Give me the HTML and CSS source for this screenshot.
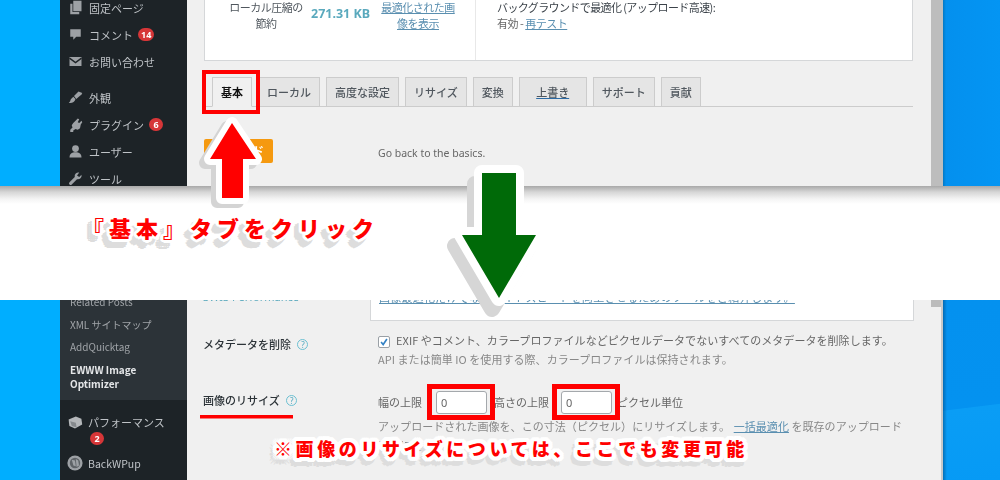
FILE: index.html
```html
<!DOCTYPE html>
<html lang="ja">
<head>
<meta charset="utf-8">
<title>EWWW Image Optimizer</title>
<link rel="stylesheet" href="styles.css">
</head>
<body>
<div class="page">

  <section class="shot shot-top">
    <div class="desk desk-left"></div>
    <nav class="side side-top">
      <a class="item"><svg class="ico" viewBox="0 0 20 20"><path d="M7 1h11v14H7z"/><path d="M3 5h3v11h9v3H3z"/></svg><span>固定ページ</span></a>
      <a class="item"><svg class="ico" viewBox="0 0 20 20"><path d="M3 3h14v10h-6l-4 4v-4H3z"/></svg><span>コメント</span><b class="badge">14</b></a>
      <a class="item"><svg class="ico" viewBox="0 0 20 20"><path d="M2 4h16v12H2z"/><path class="cut" d="M2 5.500l8 6 8-6"/></svg><span>お問い合わせ</span></a>
      <a class="item item-gap"><svg class="ico" viewBox="0 0 20 20"><path d="M8 8l6-6 5 2-1 2-7 6z"/><path d="M7 9l3 3c-1 4-5 6-9 5 2-1 2-3 3-5 1-1 2-2 3-3z"/></svg><span>外観</span></a>
      <a class="item"><svg class="ico" viewBox="0 0 20 20"><path d="M13 2l2 1-2 4 2 1 3-3 1 2-2 3-1 5-3 2-3-1-3 2v2H3v-3l3-3-1-3 2-3z"/></svg><span>プラグイン</span><b class="badge">6</b></a>
      <a class="item"><svg class="ico" viewBox="0 0 20 20"><circle cx="10" cy="6" r="4.500"/><path d="M2 18c0-5 3-7 8-7s8 2 8 7z"/></svg><span>ユーザー</span></a>
      <a class="item"><svg class="ico" viewBox="0 0 20 20"><path d="M18 5l-3 3-3-2 3-4a5 5 0 0 0-6 6L2 15a2 2 0 0 0 3 3l7-7a5 5 0 0 0 6-6z"/></svg><span>ツール</span></a>
    </nav>
    <main class="wp wp-top">
      <div class="card card-top">
        <div class="stats">
          <div class="stat-label">ローカル圧縮の<br>節約</div>
          <div class="stat-value">271.31 KB</div>
          <div class="stat-link"><a class="lnk">最適化された画<br>像を表示</a></div>
        </div>
        <div class="bg-opt">
          <div class="bg-title">バックグラウンドで最適化 (アップロード高速):</div>
          <div>有効 - <a class="lnk">再テスト</a></div>
        </div>
      </div>
      <div class="tabs">
        <a class="tab tab-on">基本</a>
        <a class="tab">ローカル</a>
        <a class="tab">高度な設定</a>
        <a class="tab">リサイズ</a>
        <a class="tab">変換</a>
        <a class="tab tab-wide"><u>上書き</u></a>
        <a class="tab">サポート</a>
        <a class="tab">貢献</a>
      </div>
      <div class="basic">
        <a class="orange">リロード</a>
        <p class="basic-text">Go back to the basics.</p>
      </div>
    </main>
    <div class="edge edge-top"></div>
    <div class="desk desk-right"></div>
  </section>

  <div class="band"></div>

  <section class="shot shot-bottom">
    <div class="desk desk-left"></div>
    <nav class="side side-bottom">
      <div class="sub">
        <a class="sub-item">Related Posts</a>
        <a class="sub-item">XML サイトマップ</a>
        <a class="sub-item">AddQuicktag</a>
        <a class="sub-item sub-on">EWWW Image<br>Optimizer</a>
      </div>
      <a class="perf">
        <svg class="ico ico-big" viewBox="0 0 20 20"><path class="light" d="M2 7l9-4 7 3 1 7-9 5-7-3z"/><path class="shade" d="M4 9l7 2 1 6-6-2z"/></svg>
        <span class="perf-text">パフォーマンス<b class="badge badge-block">2</b></span>
      </a>
      <a class="perf perf-b">
        <svg class="ico ico-big" viewBox="0 0 20 20"><circle cx="10" cy="10" r="9.500"/><circle class="hole" cx="10" cy="10" r="6.500"/><path d="M6 6l4 1 1 7-3-1zM11 5l3 2 1 6-3 2z"/></svg>
        <span>BackWPup</span>
      </a>
    </nav>
    <main class="wp wp-bottom">
      <div class="row row-head">
        <div class="head-label">SWIS Performance</div>
        <div class="card card-bottom"><a class="lnk head-link">画像最適化だけでなくサイトスピードを向上させるためのツールをご紹介します。</a></div>
      </div>
      <div class="row row-meta">
        <div class="label label-meta">メタデータを削除 <i class="help">?</i></div>
        <div class="field">
          <div class="check-line">
            <span class="check"><svg viewBox="0 0 12 12"><path d="M2.500 6l2.500 3 4.500-6.500"/></svg></span>
            <span>EXIF やコメント、カラープロファイルなどピクセルデータでないすべてのメタデータを削除します。</span>
          </div>
          <div class="hint">API または簡単 IO を使用する際、カラープロファイルは保持されます。</div>
        </div>
      </div>
      <div class="row row-resize">
        <div class="label">画像のリサイズ <i class="help">?</i></div>
        <div class="field">
          <div class="inputs">
            <span>幅の上限</span><input class="num num-w" value="0" readonly>
            <span>高さの上限</span><input class="num num-h" value="0" readonly>
            <span>ピクセル単位</span>
          </div>
          <div class="hint hint-gap">アップロードされた画像を、この寸法（ピクセル）にリサイズします。 <a class="lnk">一括最適化</a> を既存のアップロード画像に適用します。</div>
        </div>
      </div>
      <div class="row row-next">
        <div class="label">リサイズの無効化</div>
        <div class="field">WordPress が生成するサムネイルサイズを無効化します。</div>
      </div>
    </main>
    <div class="edge edge-bottom"><span class="thumb"></span></div>
    <div class="desk desk-right desk-streak"></div>
  </section>

  <svg class="marks" viewBox="0 0 1000 480" aria-hidden="true">
    <rect class="box" x="204" y="72" width="54" height="40"/>
    <rect class="box box-5" x="429.500" y="386.500" width="63" height="31"/>
    <rect class="box box-5" x="554.500" y="386.500" width="63" height="31"/>
    <path class="rule" d="M200 416.800h93"/>
    <g class="arrow-red">
      <path class="a-shadow" transform="translate(-5 4)" d="M232 123l24 36h-13v39h-21v-39h-12z"/>
      <path class="a-halo" d="M232 123l24 36h-13v39h-21v-39h-12z"/>
      <path class="a-red" d="M232 123l24 36h-13v39h-21v-39h-12z"/>
    </g>
    <g class="arrow-green">
      <path class="a-shadow" transform="translate(-7 11)" d="M482 173h34v62h20l-37 63-37-63h20z"/>
      <path class="a-halo" d="M482 173h34v62h20l-37 63-37-63h20z"/>
      <path class="a-green" d="M482 173h34v62h20l-37 63-37-63h20z"/>
    </g>
  </svg>

  <p class="note note-tab">『基本』タブをクリック</p>
  <p class="note note-resize">※画像のリサイズについては、ここでも変更可能</p>
</div>
</body>
</html>
```

FILE: styles.css
```css
* { box-sizing: border-box; }
html, body { margin: 0; padding: 0; }
body {
  width: 1000px;
  height: 480px;
  overflow: hidden;
  background: #fff;
  font-family: "Noto Sans CJK JP", "Noto Sans", sans-serif;
  font-size: 11px;
  color: #666;
}
.page { position: relative; width: 1000px; height: 480px; overflow: hidden; }
a { color: inherit; text-decoration: none; }
p { margin: 0; }

/* Screenshot strips */
.shot { display: flex; overflow: hidden; filter: blur(.35px); }
.shot-top { height: 186px; }
.shot-bottom { height: 180px; }
.desk-left { width: 60px; flex: none; background: #00aeff; }
.desk-right {
  flex: 1;
  background: linear-gradient(90deg, #0579c4 0, #0490ee 3px, #0495f3 100%);
}
.desk-streak {
  background:
    linear-gradient(90deg, rgba(0, 60, 110, .45) 0, rgba(0, 60, 110, 0) 4px),
    linear-gradient(173deg, #0491ef 0, #0492f0 59%, #0a9df5 59.500%, #069af5 100%);
}

/* Admin sidebar */
.side { width: 127px; flex: none; background: #1d2327; color: #bfc3c7; }
.side-top { padding-top: 0; margin-top: -6px; height: 192px; }
.item {
  display: flex;
  align-items: center;
  gap: 6px;
  height: 27px;
  padding-left: 8px;
}
.item-gap { margin-top: 9px; }
.ico { width: 15px; height: 15px; flex: none; fill: #9da1a5; }
.ico .cut { fill: none; stroke: #1d2327; stroke-width: 1.800; }
.ico .light { fill: #b4b7ba; }
.ico .shade { fill: #85898d; }
.ico .hole { fill: #5e6367; }
.ico-big { width: 16px; height: 16px; }
.badge {
  display: inline-block;
  height: 13px;
  min-width: 14px;
  margin-left: -1px;
  padding: 0 3px;
  border-radius: 7px;
  background: #d63638;
  color: #fff;
  font: 700 9px/13px "Noto Sans", sans-serif;
  text-align: center;
}
.badge-block { display: block; width: 14px; margin: 2px 0 0 2px; padding: 0; }

.sub {
  height: 100px;
  padding-left: 10px;
  background: #2c3338;
  color: #a0a4a8;
  font-size: 10px;
  overflow: hidden;
}
.sub-item { display: block; height: 22.500px; line-height: 22.500px; }
.sub-item:first-child { margin-top: -9px; }
.sub-on {
  margin-top: 4px;
  line-height: 14px;
  color: #e4e6e8;
  font-weight: 700;
  height: 30px;
}
.perf {
  display: flex;
  align-items: flex-start;
  gap: 5px;
  padding: 14px 0 0 7px;
  color: #bfc3c7;
}
.perf-text { line-height: 16px; }
.perf-b { padding-top: 10px; align-items: center; font-size: 10.500px; }

/* Main column */
.wp { width: 744px; flex: none; background: #f0f0f0; overflow: hidden; }
.wp-top { padding-left: 17px; }
.card { background: #fff; border: 1px solid #d5d7d9; }
.card-top {
  display: flex;
  width: 709px;
  height: 62px;
  margin-top: -1px;
  line-height: 16px;
  letter-spacing: -.5px;
  border-top: 0;
}
.stats {
  width: 271px;
  display: flex;
  align-items: flex-start;
  border-right: 1px solid #e8e8e8;
}
.stat-label { width: 78px; margin-left: 22px; text-align: center; color: #50575e; white-space: nowrap; }
.stat-value {
  margin-left: 6px;
  font: 700 12.500px/30px "Noto Sans", sans-serif;
  letter-spacing: 0;
  color: #5aa9bd;
  width: 70px;
  white-space: nowrap;
}
.stat-link { width: 74px; text-align: center; white-space: nowrap; }
.lnk { color: #5a8fb0; text-decoration: underline; }
.bg-opt { padding-left: 21px; }
.bg-title { color: #3c434a; letter-spacing: -.6px; }

/* Tabs */
.tabs {
  display: flex;
  gap: 6px;
  width: 709px;
  height: 30px;
  margin-top: 16px;
  padding-left: 8px;
  border-bottom: 1px solid #ccc;
}
.tab {
  height: 30px;
  padding: 0 8px;
  background: #e5e5e5;
  border: 1px solid #ccc;
  color: #50575e;
  font-weight: 500;
  line-height: 28px;
}
.tab-on { background: #f0f0f0; border-bottom-color: #f0f0f0; color: #111; font-weight: 700; }
.tab-wide { padding: 0 16.500px; }
.tab-wide u { color: #50575e; text-decoration-color: #2b6ba6; }

.basic { display: flex; align-items: flex-start; margin-top: 32px; }
.orange {
  width: 69px;
  height: 24px;
  padding-right: 9px;
  border-radius: 2px;
  background: #f5990f;
  color: #fff;
  font-size: 12px;
  font-weight: 700;
  line-height: 24px;
  text-align: right;
}
.basic-text { margin: 6px 0 0 105px; font: 10.500px/16px "Noto Sans", sans-serif; color: #666; }

.wp-bottom { padding-left: 16px; }
.row { display: flex; }
.row-head { height: 21px; }
.head-label {
  width: 167px;
  margin-top: -11px;
  line-height: 16px;
  color: #5aa9bd;
  font-family: "Noto Sans", sans-serif;
  white-space: nowrap;
}
.card-bottom {
  width: 544px;
  height: 21px;
  padding-left: 8px;
  border-top: 0;
  line-height: 16px;
  white-space: nowrap;
}
.head-link { display: block; margin-top: -11px; letter-spacing: .27px; }
.label {
  width: 175px;
  flex: none;
  line-height: 19px;
  color: #2c3338;
  font-weight: 500;
}
.field { width: 535px; line-height: 19px; color: #777; }
.row-meta { margin-top: 10px; }
.label-meta { padding-top: 4px; }
.row-resize { margin-top: 22px; }
.row-next { margin-top: 23px; }
.help {
  display: inline-block;
  width: 11px;
  height: 11px;
  margin-left: 4px;
  border: 1px solid #6cc0d2;
  border-radius: 50%;
  color: #4fa9c0;
  font: 400 8px/9px "Noto Sans", sans-serif;
  text-align: center;
  vertical-align: 1px;
}
.check-line { display: flex; gap: 6px; align-items: center; color: #666; letter-spacing: .05px; }
.check {
  display: block;
  width: 12px;
  height: 12px;
  flex: none;
  margin-top: 3px;
  background: #fff;
  border: 1px solid #9aa0a6;
  border-radius: 2px;
}
.check svg { display: block; width: 10px; height: 10px; fill: none; stroke: #3582c4; stroke-width: 2; }
.hint { color: #888; letter-spacing: .05px; }
.hint-gap { margin-top: 3px; max-width: 528px; }
.hint-gap .lnk { margin-left: 1px; }
.inputs { display: flex; align-items: center; height: 23px; color: #666; }
.num {
  width: 51px;
  height: 23px;
  padding: 0 4px;
  border: 1px solid #a4a8ac;
  border-radius: 3px;
  background: #fff;
  color: #666;
  font: 11px/21px "Noto Sans", sans-serif;
}
.num-w { margin: 0 7px 0 14px; }
.num-h { margin: 0 5px 0 12px; }

/* Right edge */
.edge { width: 12px; flex: none; }
.edge-top { background: #bdbdbd; }
.edge-bottom { background: #f0f0f0; border-right: 2px solid #c8c8c8; }
.thumb { display: block; width: 10px; height: 7px; background: #bcbcbc; }

/* Band between strips */
.band {
  height: 114px;
  background: linear-gradient(180deg, #a9a9a9 0, #d6d6d6 6px, #f4f4f4 13px, #fff 18px);
}

/* Annotations */
.marks { position: absolute; left: 0; top: 0; width: 1000px; height: 480px; }
.box { fill: none; stroke: #f00; stroke-width: 4; }
.box-5 { stroke-width: 5; }
.rule { stroke: #f00; stroke-width: 3.500; fill: none; }
.a-shadow, .a-halo { stroke-linejoin: round; }
.arrow-red .a-shadow { fill: #d4d4d4; stroke: #d4d4d4; stroke-width: 12; }
.arrow-red .a-halo { fill: #fff; stroke: #fff; stroke-width: 12; }
.a-red { fill: #f00; }
.arrow-green .a-shadow { fill: #d6d6d6; stroke: #d6d6d6; stroke-width: 16; }
.arrow-green .a-halo { fill: #fff; stroke: #fff; stroke-width: 16; }
.a-green { fill: #006a08; }

.note {
  position: absolute;
  color: #f00;
  font-weight: 900;
  white-space: nowrap;
}
.note-tab {
  left: 82px;
  top: 211px;
  font-size: 22px;
  line-height: 32px;
  letter-spacing: 5px;
  text-shadow:
    1px 0 #fff, -1px 0 #fff, 0 1px #fff, 0 -1px #fff,
    3px 0 #fff, -3px 0 #fff, 0 3px #fff, 0 -3px #fff,
    2px 2px #fff, -2px 2px #fff, 2px -2px #fff, -2px -2px #fff,
    3px 1px #fff, -3px 1px #fff, 3px -1px #fff, -3px -1px #fff,
    -5px 6px #ddd, -3px 6px #ddd, -7px 6px #ddd, -5px 8px #ddd, -5px 4px #ddd,
    -2px 6px #ddd, -8px 6px #ddd, -5px 9px #ddd, -5px 3px #ddd,
    -3px 8px #ddd, -7px 8px #ddd, -3px 4px #ddd, -7px 4px #ddd;
}
.note-resize {
  left: 274px;
  top: 434px;
  font-size: 18px;
  line-height: 28px;
  letter-spacing: 3.600px;
  text-shadow:
    1px 0 #fff, -1px 0 #fff, 0 1px #fff, 0 -1px #fff,
    2px 0 #fff, -2px 0 #fff, 0 2px #fff, 0 -2px #fff,
    4px 0 #fff, -4px 0 #fff, 0 4px #fff, 0 -4px #fff,
    3px 3px #fff, -3px 3px #fff, 3px -3px #fff, -3px -3px #fff,
    4px 2px #fff, -4px 2px #fff, 4px -2px #fff, -4px -2px #fff,
    2px 4px #fff, -2px 4px #fff, 2px -4px #fff, -2px -4px #fff,
    -3px 5px #ddd, -1px 5px #ddd, -5px 5px #ddd, -3px 7px #ddd, -3px 3px #ddd,
    1px 5px #ddd, -7px 5px #ddd, -3px 9px #ddd, -3px 1px #ddd,
    0 8px #ddd, -6px 8px #ddd, 0 2px #ddd, -6px 2px #ddd;
}
```
